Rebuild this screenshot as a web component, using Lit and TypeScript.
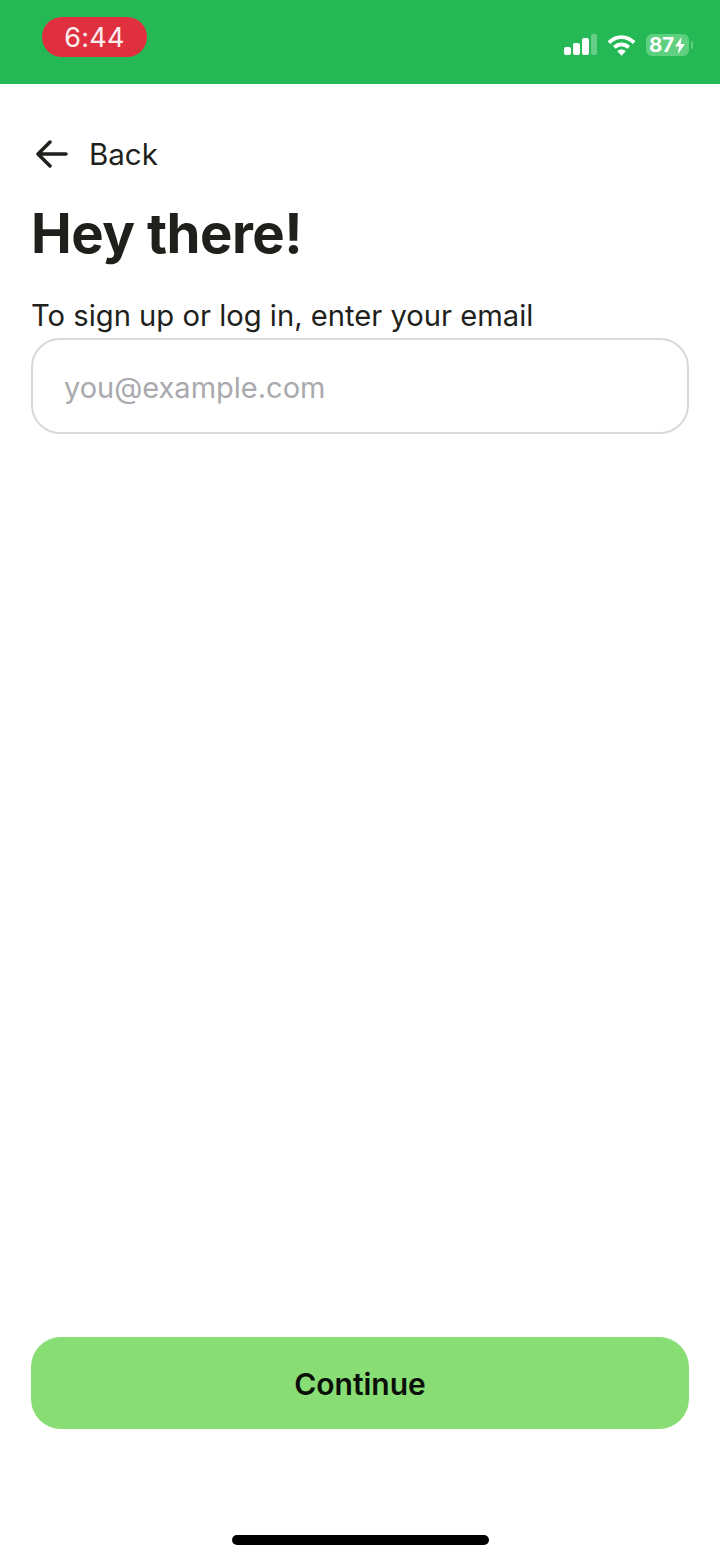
import { LitElement, css, html } from "lit";
import { customElement } from "lit/decorators.js";

@customElement("app-root")
export class AppRoot extends LitElement {
  static styles = css`
    :host {
      display: flex;
      flex-direction: column;
      width: 720px;
      height: 1560px;
      background: #fff;
      font-family: Inter, "Liberation Sans", sans-serif;
      color: #1f1f1c;
      overflow: hidden;
    }
    .status {
      height: 84px;
      flex: none;
      box-sizing: border-box;
      background: #25b956;
      display: flex;
      justify-content: space-between;
      align-items: flex-start;
      padding: 17px 31px 0 42px;
    }
    .time {
      width: 105px;
      height: 40px;
      border-radius: 20px;
      background: #e0303f;
      color: #fbeef0;
      font-size: 27px;
      letter-spacing: 0.3px;
      display: flex;
      align-items: center;
      justify-content: center;
    }
    .indicators {
      display: flex;
      align-items: center;
      gap: 10px;
      margin-top: 17px;
    }
    .signal {
      margin-left: 1px;
    }
    .battery {
      position: relative;
      width: 43px;
      height: 22px;
      box-sizing: border-box;
      border-radius: 6px;
      background: #5fd07f;
      color: #fff;
      font-size: 20.500px;
      font-weight: 700;
      line-height: 22px;
      padding-left: 3px;
      display: flex;
      align-items: center;
      gap: 1px;
    }
    .battery::after {
      content: "";
      position: absolute;
      right: -4px;
      top: 7px;
      width: 2px;
      height: 8px;
      border-radius: 0 2px 2px 0;
      background: #5fd07f;
    }
    main {
      flex: 1;
      padding: 0 31px;
      display: flex;
      flex-direction: column;
    }
    .back {
      display: flex;
      align-items: center;
      gap: 21px;
      margin-top: 52px;
      margin-left: 5px;
      height: 36px;
      font-size: 29.500px;
    }
    h1 {
      margin: 28px 0 0 0;
      font-size: 54.500px;
      line-height: 66px;
      font-weight: 650;
      letter-spacing: -0.5px;
    }
    label {
      display: block;
      margin: 31px 0 0 0;
      font-size: 29.200px;
      line-height: 38px;
    }
    .input {
      height: 96px;
      box-sizing: border-box;
      margin-top: 3px;
      border: 2px solid #d9d9dd;
      border-radius: 29px;
      padding: 2px 0 0 31px;
      display: flex;
      align-items: center;
      color: #a9a9ae;
      font-size: 29px;
    }
    .continue {
      flex: none;
      margin: 0 31px;
      height: 92px;
      box-sizing: border-box;
      padding-top: 2px;
      border-radius: 30px;
      background: #88dd75;
      color: #0a0f08;
      font-size: 30px;
      font-weight: 600;
      display: flex;
      align-items: center;
      justify-content: center;
    }
    .home {
      flex: none;
      align-self: center;
      width: 257px;
      height: 10px;
      margin: 106px 0 15px;
      border-radius: 5px;
      background: #000;
    }
  `;

  render() {
    return html`
      <div class="status">
        <div class="time">6:44</div>
        <div class="indicators">
          <svg class="signal" width="33" height="22" viewBox="0 0 33 22">
            <rect x="0" y="13" width="7" height="8" rx="2" fill="#fff" />
            <rect x="9" y="9" width="7" height="12" rx="2" fill="#fff" />
            <rect x="18" y="4" width="7" height="17" rx="2" fill="#fff" />
            <rect x="27" y="0" width="6" height="21" rx="2" fill="#fff" opacity="0.3" />
          </svg>
          <svg width="29" height="22" viewBox="0 0 30 22" fill="none" stroke="#fff" stroke-width="4">
            <path d="M2 8.500C9.500 1 20.500 1 28 8.500" />
            <path d="M7.500 13.500C12 9.500 18 9.500 22.500 13.500" />
            <path d="M15 22l-4.500-4.800C13 15 17 15 19.500 17.200z" fill="#fff" stroke="none" />
          </svg>
          <div class="battery">
            <span>87</span>
            <svg width="10" height="17" viewBox="0 0 10 17">
              <path d="M6.500 0L0 9.500h4L3 17l7-10H5.800z" fill="#fff" />
            </svg>
          </div>
        </div>
      </div>

      <main>
        <div class="back">
          <svg width="32" height="28" viewBox="0 0 32 28" fill="none" stroke="#1f1f1c" stroke-width="3.500" stroke-linecap="round" stroke-linejoin="round">
            <path d="M30 14H3M14 2L2 14l12 12" />
          </svg>
          <span>Back</span>
        </div>
        <h1>Hey there!</h1>
        <label>To sign up or log in, enter your email</label>
        <div class="input">you@example.com</div>
      </main>

      <div class="continue">Continue</div>
      <div class="home"></div>
    `;
  }
}
